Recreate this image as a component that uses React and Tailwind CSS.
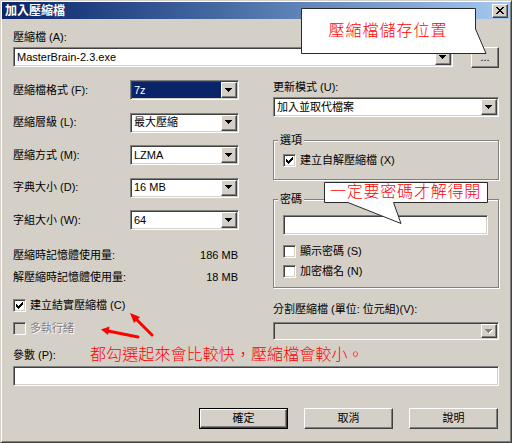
import React from 'react';

const SUNKEN =
  'border border-t-[#808080] border-l-[#808080] border-b-white border-r-white shadow-[inset_1px_1px_0_#404040,inset_-1px_-1px_0_#d4d0c8]';
const RAISED =
  'border border-t-white border-l-white border-b-[#404040] border-r-[#404040] shadow-[inset_-1px_-1px_0_#808080,inset_1px_1px_0_#d4d0c8]';

const Pixels = ({ rows, w, h, color }) => (
  <svg width={w} height={h} viewBox={`0 0 ${w} ${h}`} shapeRendering="crispEdges">
    {rows.map(([x, y, len], i) => (
      <rect key={i} x={x} y={y} width={len} height="1" fill={color} />
    ))}
  </svg>
);

const checkRows = [
  [6, 0, 1], [5, 1, 2], [0, 2, 1], [4, 2, 3], [0, 3, 2], [3, 3, 3],
  [0, 4, 5], [1, 5, 3], [2, 6, 1],
];

const closeRows = [
  [0, 0, 2], [6, 0, 2], [1, 1, 2], [5, 1, 2], [2, 2, 4], [3, 3, 2],
  [2, 4, 4], [1, 5, 2], [5, 5, 2], [0, 6, 2], [6, 6, 2],
];

const Arrow = ({ disabled }) => (
  <svg width="8" height="5" viewBox="0 0 8 5" shapeRendering="crispEdges">
    {disabled && <path d="M1 1H8V2H7V3H6V4H5V5H4V4H3V3H2V2H1Z" fill="#fff" />}
    <path d="M0 0H7V1H6V2H5V3H4V4H3V3H2V2H1V1H0Z" fill={disabled ? '#808080' : '#000'} />
  </svg>
);

const Combo = ({ value, selected, disabled, className = '' }) => (
  <div className={`${SUNKEN} ${disabled ? 'bg-[#d4d0c8]' : 'bg-white'} flex p-px ${className}`}>
    <div
      className={`flex-1 flex items-center pl-[2px] leading-none whitespace-nowrap ${
        selected ? 'bg-[#0a246a] text-white' : ''
      }`}
    >
      {value}
    </div>
    <span className={`${RAISED} bg-[#d4d0c8] w-[16px] flex items-center justify-center`}>
      <Arrow disabled={disabled} />
    </span>
  </div>
);

const Check = ({ checked, disabled, label }) => (
  <div className="flex items-center h-[13px]">
    <span
      className={`${SUNKEN} w-[13px] h-[13px] shrink-0 flex items-center justify-center ${
        disabled ? 'bg-[#d4d0c8]' : 'bg-white'
      }`}
    >
      {checked && <Pixels rows={checkRows} w={7} h={7} color="#000" />}
    </span>
    <span
      className={`ml-[4px] leading-[13px] whitespace-nowrap ${
        disabled ? 'text-[#808080] [text-shadow:1px_1px_0_#fff]' : ''
      }`}
    >
      {label}
    </span>
  </div>
);

const Button = ({ label, isDefault }) => (
  <div className={`w-[89px] h-[21px] flex ${isDefault ? 'border border-black' : ''}`}>
    <div className={`${RAISED} bg-[#d4d0c8] flex-1 flex items-center justify-center leading-none`}>
      {label}
    </div>
  </div>
);

const Group = ({ title, className = '', children }) => (
  <fieldset
    className={`border border-[#808080] shadow-[inset_1px_1px_0_#fff,1px_1px_0_#fff] pl-[9px] pr-[10px] ${className}`}
  >
    <legend className="-ml-[5px] px-[2px] bg-[#d4d0c8] leading-[14px]">{title}</legend>
    {children}
  </fieldset>
);

const leftRows = [
  { label: '壓縮檔格式 (F):', value: '7z', selected: true },
  { label: '壓縮層級 (L):', value: '最大壓縮' },
  { label: '壓縮方式 (M):', value: 'LZMA' },
  { label: '字典大小 (D):', value: '16 MB' },
  { label: '字組大小 (W):', value: '64' },
];

export default function App() {
  return (
    <div className="relative w-[512px] h-[443px] bg-[#d4d0c8] border border-t-[#d4d0c8] border-l-[#d4d0c8] border-b-[#404040] border-r-[#404040] shadow-[inset_1px_1px_0_#fff,inset_-1px_-1px_0_#808080] p-px overflow-hidden text-[11px] text-black font-['Liberation_Sans','Noto_Sans_CJK_TC',sans-serif]">
      {/* title bar */}
      <div className="h-[17px] flex items-center pl-[3px] pr-[2px] bg-linear-to-r from-[#0a246a] to-[#a6caf0]">
        <span className="text-white font-bold text-[12px] leading-none">加入壓縮檔</span>
        <span className={`${RAISED} bg-[#d4d0c8] ml-auto w-[16px] h-[14px] flex items-center justify-center`}>
          <Pixels rows={closeRows} w={8} h={7} color="#000" />
        </span>
      </div>

      <div className="px-[11px]">
        <div className="mt-[11px] h-[14px] leading-[14px]">壓縮檔 (A):</div>
        <div className="mt-[3px] flex items-start">
          <Combo value="MasterBrain-2.3.exe" className="w-[440px] h-[20px]" />
          <div className={`${RAISED} bg-[#d4d0c8] ml-auto w-[28px] h-[21px] flex items-end justify-center pb-[4px] leading-none`}>
            ...
          </div>
        </div>

        <div className="mt-[12px] flex justify-between">
          {/* left column */}
          <div className="w-[226px] flex flex-col">
            <div className="flex flex-col gap-[12.5px]">
              {leftRows.map((r) => (
                <div key={r.label} className="h-[20px] flex items-center">
                  <span className="w-[117px] whitespace-nowrap">{r.label}</span>
                  <Combo value={r.value} selected={r.selected} className="w-[109px] h-[20px]" />
                </div>
              ))}
            </div>
            <div className="mt-[18px] h-[14px] leading-[14px] flex justify-between pr-px">
              <span>壓縮時記憶體使用量:</span>
              <span>186 MB</span>
            </div>
            <div className="mt-[8px] h-[14px] leading-[14px] flex justify-between pr-px">
              <span>解壓縮時記憶體使用量:</span>
              <span>18 MB</span>
            </div>
            <div className="mt-[14.5px]">
              <Check checked label="建立結實壓縮檔 (C)" />
            </div>
            <div className="mt-[10px]">
              <Check disabled label="多執行緒" />
            </div>
          </div>

          {/* right column */}
          <div className="w-[226px] flex flex-col">
            <div className="h-[14px] leading-[14px]">更新模式 (U):</div>
            <Combo value="加入並取代檔案" className="mt-[3px] w-full h-[20px]" />
            <Group title="選項" className="mt-[16px] pt-[7px] pb-[12px]">
              <Check checked label="建立自解壓縮檔 (X)" />
            </Group>
            <Group title="密碼" className="mt-[12px] pt-[9px] pb-[9px]">
              <div className={`${SUNKEN} bg-white h-[20px] w-full`} />
              <div className="mt-[10px]">
                <Check label="顯示密碼 (S)" />
              </div>
              <div className="mt-[7px]">
                <Check label="加密檔名 (N)" />
              </div>
            </Group>
            <div className="mt-[14px] h-[14px] leading-[14px] whitespace-nowrap">
              分割壓縮檔 (單位: 位元組)(V):
            </div>
            <Combo disabled value="" className="mt-[6px] w-full h-[18px]" />
          </div>
        </div>

        <div className="mt-[7.5px] h-[14px] flex items-center">
          <span className="w-[77px] leading-[14px]">參數 (P):</span>
          <span className="text-[#ff0000] text-[16px] font-light tracking-[0.1px] leading-none whitespace-nowrap">
            都勾選起來會比較快，壓縮檔會較小。
          </span>
        </div>
        <div className={`${SUNKEN} bg-white mt-[4px] h-[20px] w-full`} />

        <div className="mt-[22px] flex justify-end gap-[16px]">
          <Button label="確定" isDefault />
          <Button label="取消" />
          <div className="w-[90px] flex">
            <Button label="說明" />
          </div>
        </div>
      </div>

      {/* annotations drawn over the dialog */}
      <div className="absolute -left-px -top-px w-[512px] h-[443px] pointer-events-none">
        <svg width="512" height="443" viewBox="0 0 512 443" className="absolute left-0 top-0">
          <path
            d="M301.5 8.5H475.5V29L486 53.5L472 53.5H301.5Z"
            fill="#fff"
            stroke="#2a2a2a"
            strokeWidth="1"
          />
          <path
            d="M324.5 182.5H487.5V202.5H393.5L401 223.5L348 202.5H324.5Z"
            fill="#fff"
            stroke="#2a2a2a"
            strokeWidth="1"
          />
          <g stroke="#ff0000" strokeWidth="3" strokeLinecap="round" fill="#ff0000">
            <line x1="152" y1="335" x2="136" y2="319" />
            <line x1="138" y1="337" x2="108" y2="331" />
          </g>
          <g fill="#ff0000">
            <polygon points="130,313 140,317 134,323" />
            <polygon points="101,329.5 109.5,326.5 108,335" />
          </g>
        </svg>
        <div className="absolute left-[301px] top-[8px] w-[174px] h-[45px] flex items-center justify-center text-[#ff0000] text-[16px] font-light tracking-[1px] leading-none">
          壓縮檔儲存位置
        </div>
        <div className="absolute left-[324px] top-[182px] w-[163px] h-[20px] flex items-center justify-center text-[#ff0000] text-[16px] font-light tracking-[0.8px] leading-none">
          一定要密碼才解得開
        </div>
      </div>
    </div>
  );
}
